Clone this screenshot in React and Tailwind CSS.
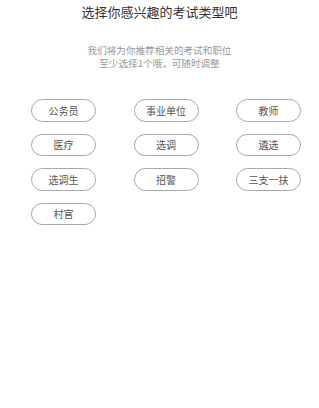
export default function App() {
  const items = ["公务员", "事业单位", "教师", "医疗", "选调", "遴选", "选调生", "招警", "三支一扶", "村官"];
  return (
    <div className="w-[319px] h-[408px] bg-white" style={{ fontFamily: '"Noto Sans CJK SC", "Noto Sans", sans-serif' }}>
      <div className="pt-[3px] text-center text-[13px] leading-[18px] text-[#333]">选择你感兴趣的考试类型吧</div>
      <div className="mt-[23px] text-center text-[9.6px] leading-[12.5px] text-[#999]">
        <div>我们将为你推荐相关的考试和职位</div>
        <div>至少选择1个哦，可随时调整</div>
      </div>
      <div className="mt-[30px] pl-[31px] grid grid-cols-[65px_65px_65px] gap-x-[37.5px] gap-y-[12px]">
        {items.map((t) => (
          <div key={t} className="h-[22.5px] rounded-full border border-[#a8a8a8] flex items-center justify-center text-[10px] text-[#555]">
            {t}
          </div>
        ))}
      </div>
    </div>
  );
}
